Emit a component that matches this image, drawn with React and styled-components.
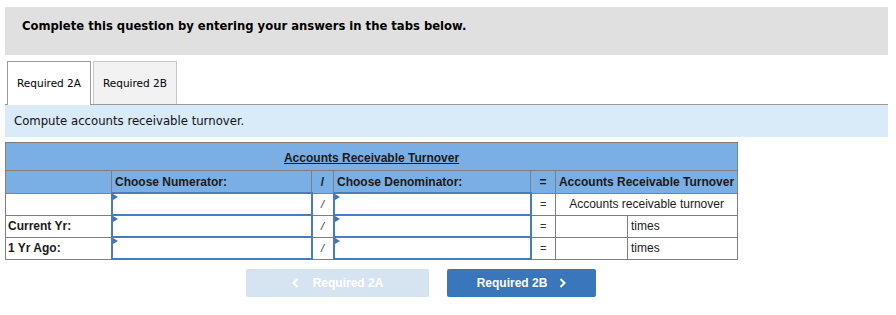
import React from 'react'
import styled, { createGlobalStyle } from 'styled-components'

const GlobalStyle = createGlobalStyle`
  body {
    margin: 0;
    background: #fff;
    font-family: "DejaVu Sans", Verdana, sans-serif;
  }
`

const Page = styled.div`
  padding: 7px 8px 0 5px;
  width: 896px;
  box-sizing: border-box;
`

const Banner = styled.div`
  background: #e0e0e0;
  height: 48px;
  box-sizing: border-box;
  padding: 12px 0 0 17px;
  font-size: 11.6px;
  font-weight: bold;
  color: #000;
`

const TabBar = styled.div`
  display: flex;
  gap: 2px;
  padding: 6px 0 0 2px;
  border-bottom: 1px solid #9a9a9a;
`

const Tab = styled.div`
  width: ${p => p.$w}px;
  box-sizing: border-box;
  display: flex;
  align-items: center;
  justify-content: center;
  padding-bottom: 1px;
  font-size: 10.5px;
  color: #000;
  background: ${p => (p.$active ? '#fff' : '#f2f2f2')};
  border: 1px solid ${p => (p.$active ? '#9a9a9a' : '#c8c8c8')};
  border-bottom: none;
  margin-bottom: ${p => (p.$active ? '-1px' : '0')};
  height: ${p => (p.$active ? '44px' : '43px')};
`

const Prompt = styled.div`
  background: #d9eaf8;
  height: 32px;
  display: flex;
  align-items: center;
  padding-left: 9px;
  font-size: 11.7px;
  color: #111;
`

const Grid = styled.table`
  margin-top: 5px;
  border-collapse: collapse;
  table-layout: fixed;
  width: 732px;
  font-family: "Liberation Sans", Arial, sans-serif;
  font-size: 12px;
  color: #1a1a1a;
  td {
    border: 1px solid #7f7f7f;
    padding: 0;
    white-space: nowrap;
    overflow: hidden;
  }
`

const TitleCell = styled.td`
  background: #7aafe6;
  height: 22px;
  text-align: center;
  font-weight: bold;
  text-decoration: underline;
  vertical-align: bottom;
  padding-bottom: 5px !important;
`

const HeadCell = styled.td`
  background: #7aafe6;
  height: 21px;
  font-weight: bold;
  text-align: ${p => p.$align || 'left'};
  padding-left: ${p => p.$pl || 0}px !important;
`

const LabelCell = styled.td`
  height: 21px;
  font-weight: bold;
  padding-left: 2px !important;
`

const MarkCell = styled.td`
  text-align: center;
  font-size: 11px;
  color: #333;
  font-style: ${p => (p.$italic ? 'italic' : 'normal')};
`

const InputCell = styled.td`
  position: relative;
  border: 2px solid #4a7bbd !important;
  background: #fff;
  &::before {
    content: '';
    position: absolute;
    left: 0;
    top: 0;
    border-left: 5px solid #3f74bd;
    border-top: 3px solid transparent;
    border-bottom: 3px solid transparent;
  }
`

const TextCell = styled.td`
  text-align: ${p => p.$align || 'left'};
  padding-left: ${p => p.$pl || 0}px !important;
`

const NavRow = styled.div`
  display: flex;
  gap: 18px;
  padding: 9px 0 0 241px;
`

const NavButton = styled.div`
  width: ${p => p.$w}px;
  height: 28px;
  border-radius: 2px;
  display: flex;
  align-items: center;
  justify-content: center;
  gap: ${p => p.$gap}px;
  font-family: "Liberation Sans", Arial, sans-serif;
  font-size: 12px;
  font-weight: bold;
  color: #fff;
  background: ${p => (p.$disabled ? '#d6e3f1' : '#3a76bb')};
`

const Chevron = ({ dir }) => (
  <svg width="7" height="10" viewBox="0 0 7 10">
    <path
      d={dir === 'left' ? 'M5.5 1 L1.5 5 L5.5 9' : 'M1.5 1 L5.5 5 L1.5 9'}
      fill="none"
      stroke="#fff"
      strokeWidth="2"
    />
  </svg>
)

const rows = ['', 'Current Yr:', '1 Yr Ago:']
const widths = [106, 200, 22, 197, 25, 72, 110]

export default function App() {
  return (
    <Page>
      <GlobalStyle />
      <Banner>Complete this question by entering your answers in the tabs below.</Banner>
      <TabBar>
        <Tab $active $w={84}>Required 2A</Tab>
        <Tab $w={84}>Required 2B</Tab>
      </TabBar>
      <Prompt>Compute accounts receivable turnover.</Prompt>
      <Grid>
        <colgroup>
          {widths.map((w, i) => (
            <col key={i} style={{ width: w }} />
          ))}
        </colgroup>
        <tbody>
          <tr>
            <TitleCell colSpan={7}>Accounts Receivable Turnover</TitleCell>
          </tr>
          <tr>
            <HeadCell />
            <HeadCell $pl={3}>Choose Numerator:</HeadCell>
            <HeadCell $align="center">/</HeadCell>
            <HeadCell $pl={3}>Choose Denominator:</HeadCell>
            <HeadCell $align="center">=</HeadCell>
            <HeadCell colSpan={2} $align="center">Accounts Receivable Turnover</HeadCell>
          </tr>
          {rows.map((label, i) => (
            <tr key={i}>
              <LabelCell>{label}</LabelCell>
              <InputCell />
              <MarkCell $italic>/</MarkCell>
              <InputCell />
              <MarkCell>=</MarkCell>
              {i === 0 ? (
                <TextCell colSpan={2} $align="center">Accounts receivable turnover</TextCell>
              ) : (
                <>
                  <TextCell />
                  <TextCell $pl={3}>times</TextCell>
                </>
              )}
            </tr>
          ))}
        </tbody>
      </Grid>
      <NavRow>
        <NavButton $disabled $w={183} $gap={14}>
          <Chevron dir="left" />
          Required 2A
        </NavButton>
        <NavButton $w={149} $gap={12}>
          Required 2B
          <Chevron dir="right" />
        </NavButton>
      </NavRow>
    </Page>
  )
}
